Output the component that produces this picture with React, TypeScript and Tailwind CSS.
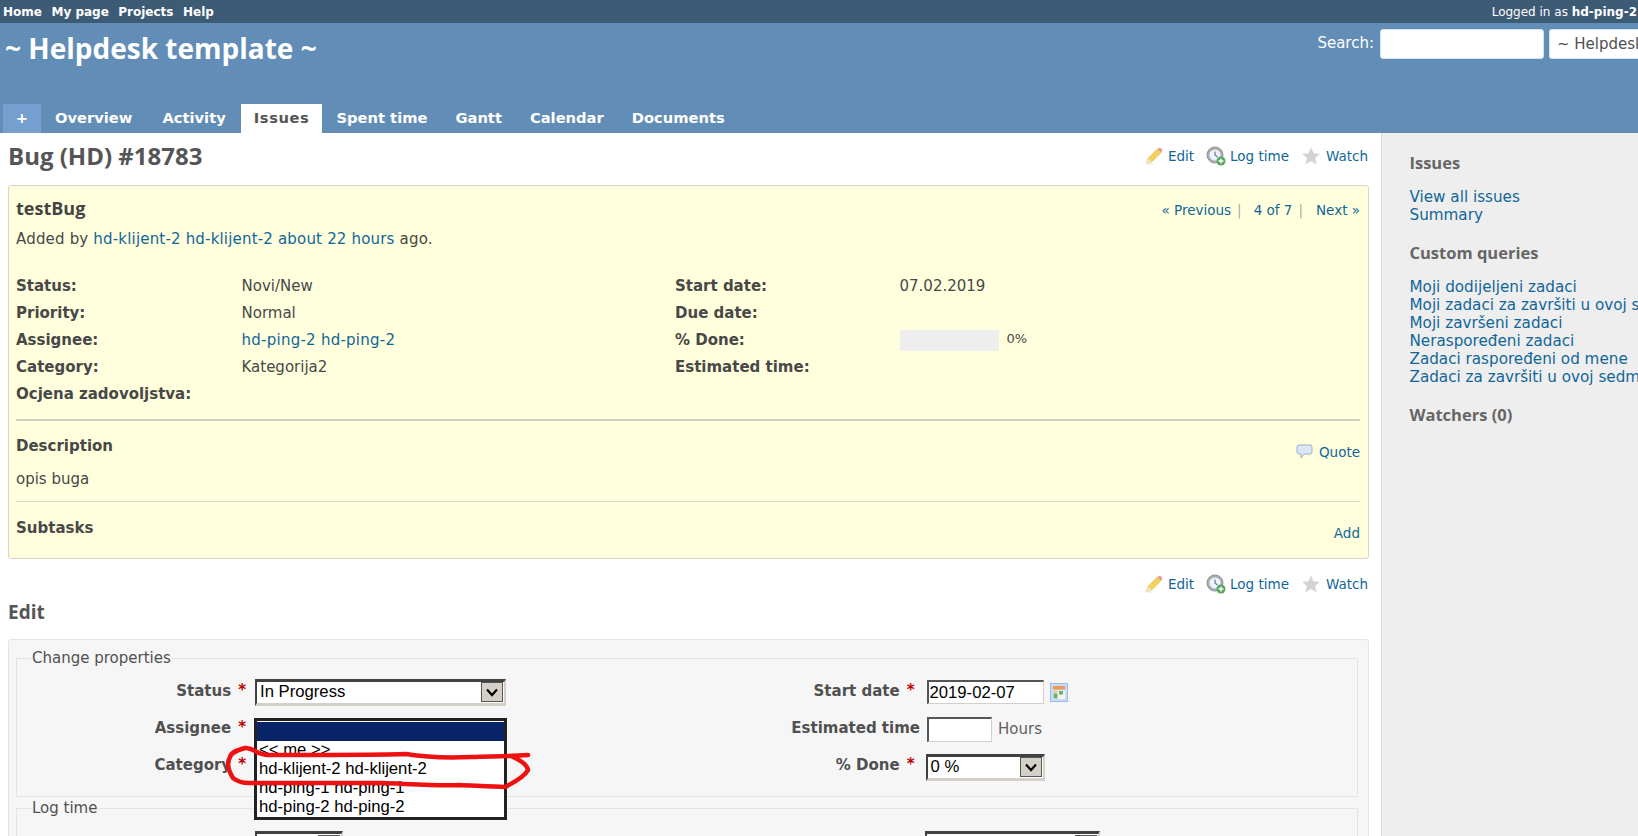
import React from "react";

const heading = "font-['Open_Sans',sans-serif] font-bold";
const link = "text-[#116699]";

function PencilIcon() {
  return (
    <svg width="18" height="18" viewBox="0 0 18 18" className="shrink-0">
      <path d="M1.5 16.5 L3 11.5 L12.5 2 L16 5.5 L6.5 15 Z" fill="#f3d35a" stroke="#dcb54a" strokeWidth="0.8" />
      <path d="M12.5 2 L14 0.8 Q15 0.4 16 1.2 L17 2.4 Q17.5 3.4 17 4.2 L16 5.5 Z" fill="#ee9a9a" />
      <path d="M1.5 16.5 L3 11.5 L6.5 15 Z" fill="#f6e6c8" />
      <path d="M1 17 H8" stroke="#e4e4e4" strokeWidth="1" />
    </svg>
  );
}

function ClockIcon() {
  return (
    <svg width="20" height="20" viewBox="0 0 20 20" className="shrink-0">
      <circle cx="9" cy="9" r="8" fill="#a9aeb0" stroke="#8e9396" strokeWidth="1" />
      <circle cx="9" cy="9" r="5.6" fill="#eef3fa" />
      <path d="M9 5.5 V9 L11.5 11" fill="none" stroke="#5b7ea8" strokeWidth="1.2" />
      <circle cx="15" cy="15" r="4.5" fill="#58a55c" />
      <path d="M15 12.5 V17.5 M12.5 15 H17.5" stroke="#ffffff" strokeWidth="1.4" />
    </svg>
  );
}

function StarIcon() {
  return (
    <svg width="18" height="18" viewBox="0 0 18 18" className="shrink-0">
      <path d="M9 0.8 L11.5 6.6 L17.4 7 L12.9 11 L14.3 17 L9 13.8 L3.7 17 L5.1 11 L0.6 7 L6.5 6.6 Z" fill="#d3d3d3" stroke="#dcdcdc" strokeWidth="0.6" />
    </svg>
  );
}

function QuoteIcon() {
  return (
    <svg width="17" height="16" viewBox="0 0 17 16" className="shrink-0">
      <path d="M3 1 H14 Q16 1 16 3 V8 Q16 10 14 10 H8 L5 14 V10 H3 Q1 10 1 8 V3 Q1 1 3 1 Z" fill="#dbe6f6" stroke="#9db0c6" strokeWidth="1" />
    </svg>
  );
}

function CalendarIcon() {
  return (
    <svg width="18" height="19" viewBox="0 0 18 19" className="shrink-0">
      <rect x="0.5" y="0.5" width="17" height="18" fill="#c9dcf5" stroke="#9bbce6" />
      <rect x="3" y="3" width="12" height="3.5" fill="#ee9a55" />
      <rect x="3" y="7.5" width="12" height="8.5" fill="#f4f6f4" />
      <rect x="3.5" y="10.5" width="4" height="5" fill="#6bb06f" />
      <rect x="9" y="8" width="4" height="3.5" fill="#6bb06f" />
      <rect x="3.5" y="7.5" width="4" height="2.5" fill="#f0c98c" />
    </svg>
  );
}

function Actions() {
  return (
    <div className={`flex items-center text-[13.5px] mr-[1px] ${link}`}>
      <PencilIcon />
      <span className="ml-[5px]">Edit</span>
      <span className="ml-[12px]"><ClockIcon /></span>
      <span className="ml-[4px]">Log time</span>
      <span className="ml-[13px]"><StarIcon /></span>
      <span className="ml-[6px]">Watch</span>
    </div>
  );
}

function ClassicSelect({ value, className }: { value: string; className: string }) {
  return (
    <div className={`flex items-center bg-white border-t-[3px] border-l-[2px] border-b-[3px] border-r-[2px] border-t-[#404040] border-l-[#404040] border-b-[#d4d0c8] border-r-[#d4d0c8] font-['Liberation_Sans',sans-serif] text-[16.7px] text-black ${className}`}>
      <span className="flex-1 pl-[3px] whitespace-nowrap">{value}</span>
      <span className="w-[22px] h-[20px] mr-[1px] bg-[#d4d0c8] border border-[#555] flex items-center justify-center">
        <svg width="12" height="9" viewBox="0 0 12 9">
          <path d="M1 1.5 L6 7 L11 1.5" fill="none" stroke="#000" strokeWidth="2.2" />
        </svg>
      </span>
    </div>
  );
}

function DetailRow({ l1, v1, l2, v2 }: { l1: string; v1?: React.ReactNode; l2?: string; v2?: React.ReactNode }) {
  return (
    <div className="flex h-[27px] items-center text-[#484848]">
      <span className="w-[225.5px] font-bold">{l1}</span>
      <span className="w-[433.5px]">{v1}</span>
      <span className="w-[224.5px] font-bold">{l2}</span>
      <span className="flex-1">{v2}</span>
    </div>
  );
}

function FormLabel({ text, required, width }: { text: string; required?: boolean; width: string }) {
  return (
    <div className={`flex justify-end items-center text-[#505050] font-bold text-[15px] shrink-0 ${width}`}>
      <span>{text}</span>
      {required ? <span className="ml-[7px] text-[#bb0000] -mt-[2px]">*</span> : <span className="w-0" />}
    </div>
  );
}

export default function App() {
  const queries = [
    "Moji dodijeljeni zadaci",
    "Moji zadaci za završiti u ovoj sedmici",
    "Moji završeni zadaci",
    "Neraspoređeni zadaci",
    "Zadaci raspoređeni od mene",
    "Zadaci za završiti u ovoj sedmici",
  ];
  const tabs = [
    { name: "Overview", cls: "pl-[14px] pr-[16px]" },
    { name: "Activity", cls: "pl-[14px] pr-[15px]" },
    { name: "Issues", cls: "px-[13px] bg-white text-[#555555] tracking-[0.6px]" },
    { name: "Spent time", cls: "px-[14px]" },
    { name: "Gantt", cls: "px-[14px]" },
    { name: "Calendar", cls: "px-[14px]" },
    { name: "Documents", cls: "px-[14px]" },
  ];

  return (
    <div className="relative w-[1638px] h-[836px] overflow-hidden bg-white font-['DejaVu_Sans',sans-serif] text-[15px] text-[#484848]">
      {/* Top menu */}
      <div className="h-[23px] bg-[#3e5b76] flex items-center justify-between text-white text-[12px] overflow-hidden">
        <div className="flex gap-[9.5px] pl-[3px] font-bold">
          <span>Home</span>
          <span>My page</span>
          <span>Projects</span>
          <span>Help</span>
        </div>
        <div className="whitespace-nowrap mr-[1px]">
          Logged in as <span className="font-bold">hd-ping-2</span>
        </div>
      </div>

      {/* Header */}
      <div className="h-[110px] bg-[#628db6] flex flex-col justify-between">
        <div className="flex justify-between items-start">
          <div className={`${heading} text-[28px] text-white pl-[5px] pt-[4px] leading-[42px]`}>~ Helpdesk template ~</div>
          <div className="flex items-center pt-[6px] text-white text-[15px] overflow-hidden">
            <span className="mr-[6px] -mt-[2px]">Search:</span>
            <div className="w-[164px] h-[30px] bg-white rounded-[3px] border border-[#d8e2ec]" />
            <div className="ml-[5px] w-[89px] h-[30px] bg-white rounded-l-[3px] border border-[#d8e2ec] border-r-0 text-[#505050] pl-[7px] leading-[28px] overflow-hidden whitespace-nowrap">
              ~ Helpdesk template ~
            </div>
          </div>
        </div>
        <div className="flex h-[29px] pl-[3px] items-stretch font-bold text-[14.7px] text-white">
          <div className="w-[38px] bg-[#759fcf] flex items-center justify-center">+</div>
          {tabs.map((t) => (
            <div key={t.name} className={`flex items-center ${t.cls}`}>{t.name}</div>
          ))}
        </div>
      </div>

      <div className="flex h-[703px]">
        {/* Main content */}
        <div className="w-[1381px] shrink-0 pl-[8px] pr-[12px]">
          <div className="flex justify-between items-center h-[52px]">
            <div className={`${heading} text-[24px] text-[#555555] -mt-[6px]`}>Bug (HD) #18783</div>
            <div className="-mt-[6px]"><Actions /></div>
          </div>

          {/* Issue box */}
          <div className="h-[374px] bg-[#ffffdd] border border-[#d7d7c7] rounded-[3px] pl-[7px] pr-[8px]">
            <div className="flex justify-between pt-[9px] h-[40px]">
              <div className={`${heading} text-[18px] text-[#444444]`}>testBug</div>
              <div className={`flex pt-[5px] text-[13.5px] ${link}`}>
                <span>« Previous</span>
                <span className="text-[#aaaaaa] ml-[6px]">|</span>
                <span className="ml-[12px]">4 of 7</span>
                <span className="text-[#aaaaaa] ml-[6px]">|</span>
                <span className="ml-[13px]">Next »</span>
              </div>
            </div>
            <div className="h-[26px] flex items-center tracking-[0.18px]">
              <span>Added by&nbsp;</span>
              <span className={link}>hd-klijent-2 hd-klijent-2</span>
              <span>&nbsp;</span>
              <span className={link}>about 22 hours</span>
              <span>&nbsp;ago.</span>
            </div>
            <div className="h-[21px]" />
            <DetailRow l1="Status:" v1="Novi/New" l2="Start date:" v2="07.02.2019" />
            <DetailRow l1="Priority:" v1="Normal" l2="Due date:" />
            <DetailRow
              l1="Assignee:"
              v1={<span className={`${link} tracking-[0.25px]`}>hd-ping-2 hd-ping-2</span>}
              l2="% Done:"
              v2={
                <div className="flex items-start">
                  <div className="w-[99px] h-[21px] bg-[#eeeeee]" />
                  <span className="ml-[8px] text-[13px] -mt-[1px]">0%</span>
                </div>
              }
            />
            <DetailRow l1="Category:" v1="Kategorija2" l2="Estimated time:" />
            <DetailRow l1="Ocjena zadovoljstva:" />
            <div className="h-[2px] mt-[11px] bg-[#cfcfbf]" />
            <div className="flex justify-between h-[50px] pt-[14px]">
              <span className="font-bold">Description</span>
              <div className={`flex items-center h-[20px] mt-[7px] text-[13.5px] ${link}`}>
                <QuoteIcon />
                <span className="ml-[6px]">Quote</span>
              </div>
            </div>
            <div className="h-[30px] -mt-[3px] mb-[3px]">opis buga</div>
            <div className="h-[1px] bg-[#d9d9c9]" />
            <div className="flex justify-between pt-[15px]">
              <span className="font-bold">Subtasks</span>
              <span className={`${link} mt-[6px] text-[13.5px]`}>Add</span>
            </div>
          </div>

          <div className="flex justify-end items-center h-[50px]">
            <Actions />
          </div>

          <div className={`${heading} text-[19px] text-[#555555] h-[30px] leading-[6px]`}>Edit</div>

          {/* Edit form */}
          <div className="bg-[#f6f6f6] border border-[#e4e4e4] rounded-[3px] h-[240px] pl-[7px] pr-[10px] pt-[9px]">
            <fieldset className="border border-[#e4e4e4] h-[148px] pl-[14px]">
              <legend className="px-[1px] text-[#505050] text-[15px] leading-[19px]">Change properties</legend>
              <div className="flex pt-[5px]">
                <div className="flex flex-col">
                  <div className="flex h-[37px] items-center">
                    <FormLabel text="Status" required width="w-[215px]" />
                    <ClassicSelect value="In Progress" className="ml-[9px] w-[251px] h-[27px] mt-[1px]" />
                  </div>
                  <div className="flex h-[37px] items-center">
                    <FormLabel text="Assignee" required width="w-[215px]" />
                  </div>
                  <div className="flex h-[37px] items-center">
                    <FormLabel text="Category" required width="w-[215px]" />
                  </div>
                </div>
                <div className="flex flex-col pl-[198px]">
                  <div className="flex h-[37px] items-center">
                    <FormLabel text="Start date" required width="w-[210.5px]" />
                    <div className="ml-[12px] w-[117px] h-[24px] mt-[1px] bg-white border-t-2 border-l-2 border-t-[#555] border-l-[#555] border-r border-b border-r-[#d4d0c8] border-b-[#d4d0c8] font-['Liberation_Sans',sans-serif] text-[16.7px] text-black leading-[21px] pl-[1px]">2019-02-07</div>
                    <span className="ml-[6px] mt-[1px]"><CalendarIcon /></span>
                  </div>
                  <div className="flex h-[37px] items-center">
                    <FormLabel text="Estimated time" width="w-[216px]" />
                    <div className="ml-[7px] w-[65px] h-[25px] mt-[1px] bg-white border-t-2 border-l-2 border-t-[#555] border-l-[#555] border-r border-b border-r-[#d4d0c8] border-b-[#d4d0c8]" />
                    <span className="ml-[6px] mt-[1px] text-[#606060]">Hours</span>
                  </div>
                  <div className="flex h-[37px] items-center">
                    <FormLabel text="% Done" required width="w-[210.5px]" />
                    <ClassicSelect value="0 %" className="ml-[11px] w-[119px] h-[27px] mt-[3px]" />
                  </div>
                </div>
              </div>
            </fieldset>
            <fieldset className="mt-[2px] border border-[#e4e4e4] h-[60px] pl-[14px]">
              <legend className="px-[1px] text-[#505050] text-[15px] leading-[19px]">Log time</legend>
              <div className="flex pt-[13px]">
                <FormLabel text="Project" required width="w-[215px] self-start mt-[2px]" />
                <ClassicSelect value="" className="ml-[9px] w-[88px] h-[27px]" />
                <FormLabel text="Activity" required width="w-[571px] self-start mt-[2px]" />
                <ClassicSelect value="" className="ml-[11px] w-[175px] h-[27px]" />
              </div>
            </fieldset>
          </div>
        </div>

        {/* Sidebar */}
        <aside className="flex-1 min-w-0 bg-[#eeeeee] border-l border-[#dddddd] pl-[27.5px] overflow-hidden whitespace-nowrap">
          <div className={`${heading} text-[16.5px] text-[#666666] mt-[18px] leading-[24px]`}>Issues</div>
          <div className={`mt-[13px] text-[15.2px] leading-[18px] ${link}`}>
            <div>View all issues</div>
            <div>Summary</div>
          </div>
          <div className={`${heading} text-[16.5px] text-[#666666] mt-[17px] leading-[24px]`}>Custom queries</div>
          <div className={`mt-[13px] text-[15.2px] leading-[18px] ${link}`}>
            {queries.map((q) => (
              <div key={q}>{q}</div>
            ))}
          </div>
          <div className={`${heading} text-[16.5px] text-[#666666] mt-[17px] leading-[24px]`}>Watchers (0)</div>
        </aside>
      </div>

      {/* Open dropdown list */}
      <div className="absolute left-[254px] top-[718px] w-[253px] h-[102px] border-[3px] border-[#222222] bg-white font-['Liberation_Sans',sans-serif] text-[16.7px] leading-[19px] text-black">
        <div className="h-[19px] mt-[1px] bg-[#0a246a]" />
        <div className="pl-[2px] -mt-[1px]">
          <div>&lt;&lt; me &gt;&gt;</div>
          <div>hd-klijent-2 hd-klijent-2</div>
          <div>hd-ping-1 hd-ping-1</div>
          <div>hd-ping-2 hd-ping-2</div>
        </div>
      </div>

      {/* Hand drawn red ring */}
      <svg className="absolute left-0 top-0" width="1638" height="836" viewBox="0 0 1638 836" fill="none">
        <path
          d="M528 755 C500 757 490 756 471 757 C450 758 430 758 406 754 C380 755 320 755 268 755 C258 755 252 747 245 748 C238 750 231 752 230 757 C227 762 228 770 233 778 C238 782 243 783 249 783 C300 783 340 783 383 783 C410 784 440 786 459 785 C480 786 495 787 505 787 C515 782 525 776 528 770 C527 765 520 760 513 757"
          stroke="#ee1111"
          strokeWidth="4.5"
          strokeLinecap="round"
          strokeLinejoin="round"
        />
      </svg>
    </div>
  );
}
